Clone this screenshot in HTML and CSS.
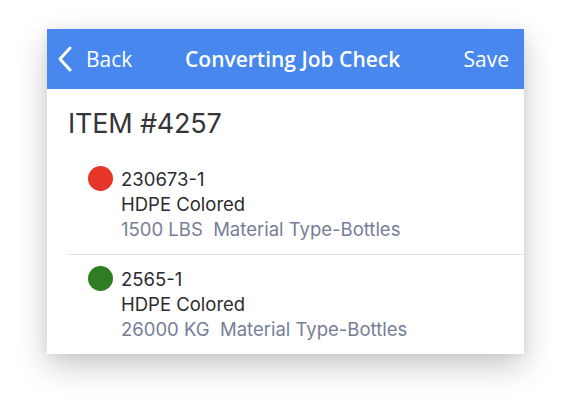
FILE: index.html
```html
<!DOCTYPE html>
<html>
<head>
<meta charset="utf-8">
<link rel="stylesheet" href="styles.css">
</head>
<body>
<div class="card">
  <header class="bar">
    <div class="back">
      <svg class="chev" width="16" height="26" viewBox="0 0 16 26"><path d="M13 2 L3 13 L13 24" fill="none" stroke="#fff" stroke-width="3" stroke-linecap="round" stroke-linejoin="round"/></svg>
      <span>Back</span>
    </div>
    <div class="title">Converting Job Check</div>
    <div class="save">Save</div>
  </header>
  <main class="content">
    <h1 class="item">ITEM #4257</h1>
    <ul class="list">
      <li class="row">
        <span class="dot red"></span>
        <div class="info">
          <div class="code">230673-1</div>
          <div class="name">HDPE Colored</div>
          <div class="meta">1500 LBS&nbsp; Material Type-Bottles</div>
        </div>
      </li>
      <li class="row">
        <span class="dot green"></span>
        <div class="info">
          <div class="code">2565-1</div>
          <div class="name">HDPE Colored</div>
          <div class="meta">26000 KG&nbsp; Material Type-Bottles</div>
        </div>
      </li>
    </ul>
  </main>
</div>
</body>
</html>
```
FILE: styles.css
```css
html, body {
  margin: 0;
  padding: 0;
  background: #fff;
}
html { height: 100%; }
body {
  min-height: 100%;
  box-sizing: border-box;
  padding: 29px 0 0 47px;
}
.card {
  width: 477px;
  height: 325px;
  background: #fff;
  box-shadow: 0 12px 30px rgba(0, 0, 0, 0.22), 0 0 10px rgba(0, 0, 0, 0.06);
  overflow: hidden;
}
.bar {
  height: 60px;
  background: #4787ee;
  color: #fff;
  font-family: "Open Sans", sans-serif;
  font-size: 21px;
  display: flex;
  align-items: center;
  padding: 0 15px 0 10px;
}
.back {
  display: flex;
  align-items: center;
  gap: 13px;
  width: 128px;
}
.chev { display: block; }
.title {
  flex: 1;
  font-weight: 600;
}
.content {
  font-family: "Inter", "Liberation Sans", sans-serif;
  color: #2b2b2f;
}
.item {
  margin: 0;
  font-weight: 400;
  font-size: 27px;
  padding: 19px 0 0 21px;
  line-height: 32px;
  color: #333538;
  letter-spacing: -0.2px;
}
.list {
  list-style: none;
  margin: 15px 0 0 20px;
  padding: 0;
}
.row {
  display: flex;
  gap: 8px;
  padding: 7px 0 0 21px;
  height: 99px;
  box-sizing: border-box;
}
.row + .row {
  border-top: 1px solid #e2e2e4;
  height: 100px;
}
.dot {
  width: 25px;
  height: 25px;
  border-radius: 50%;
  flex: none;
  margin-top: 4px;
}
.red { background: #e8352a; }
.green { background: #2f7d23; }
.info {
  margin-top: 5px;
  font-size: 18.5px;
  line-height: 25px;
}
.meta { color: #767e96; }
```
